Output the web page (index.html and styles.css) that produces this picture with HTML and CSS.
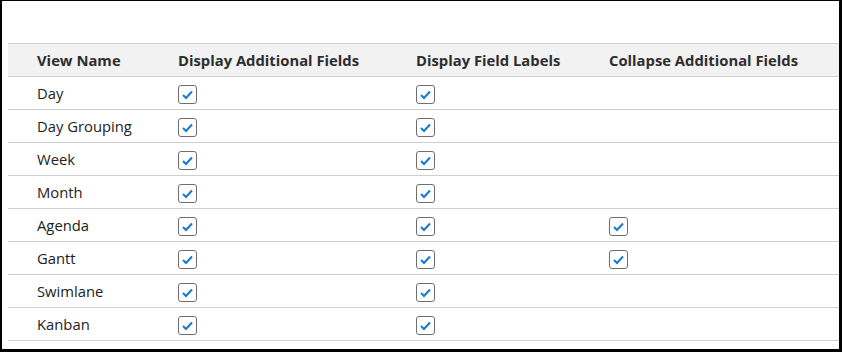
FILE: index.html
```html
<!DOCTYPE html>
<html>
<head>
    <title>Views</title>
    <link rel="stylesheet" href="styles.css">
</head>
<body>
    <div class="frame">
        <table class="views">
            <colgroup>
                <col class="c-name">
                <col class="c-add">
                <col class="c-labels">
                <col class="c-collapse">
            </colgroup>
            <thead>
                <tr>
                    <th>View Name</th>
                    <th>Display Additional Fields</th>
                    <th>Display Field Labels</th>
                    <th>Collapse Additional Fields</th>
                </tr>
            </thead>
            <tbody id="viewList"></tbody>
        </table>
    </div>

    <script>
        const views = [
            { name: 'Day', add: true, labels: true, collapse: false },
            { name: 'Day Grouping', add: true, labels: true, collapse: false },
            { name: 'Week', add: true, labels: true, collapse: false },
            { name: 'Month', add: true, labels: true, collapse: false },
            { name: 'Agenda', add: true, labels: true, collapse: true },
            { name: 'Gantt', add: true, labels: true, collapse: true },
            { name: 'Swimlane', add: true, labels: true, collapse: false },
            { name: 'Kanban', add: true, labels: true, collapse: false }
        ];

        const box = `<svg class="check" width="19" height="19" viewBox="0 0 19 19">
            <rect x="0.5" y="0.5" width="18" height="18" rx="2.5" fill="#fff" stroke="#6e6e6e"/>
            <polyline points="5,10 8,13 14,6.5" fill="none" stroke="#1479d4" stroke-width="2"/>
        </svg>`;

        const tbody = document.getElementById('viewList');
        views.forEach(v => {
            const row = document.createElement('tr');
            row.innerHTML = `
                <td>${v.name}</td>
                <td>${v.add ? box : ''}</td>
                <td>${v.labels ? box : ''}</td>
                <td>${v.collapse ? box : ''}</td>
            `;
            tbody.appendChild(row);
        });
    </script>
</body>
</html>
```

FILE: styles.css
```css
html, body {
    margin: 0;
    padding: 0;
    background: #fff;
}
.frame {
    box-sizing: border-box;
    width: 842px;
    height: 352px;
    border-style: solid;
    border-color: #000;
    border-width: 1px 3px 3px 2px;
    padding: 42px 0 0 6px;
    overflow: hidden;
}
.views {
    width: 831px;
    border-collapse: collapse;
    table-layout: fixed;
    font-family: "Open Sans", "Noto Sans", sans-serif;
    color: #222;
}
.c-name { width: 170px; }
.c-add { width: 238px; }
.c-labels { width: 193px; }
th, td {
    border-top: 1px solid #cfcfcf;
    border-bottom: 1px solid #cfcfcf;
    padding: 0;
    text-align: left;
    white-space: nowrap;
}
th:first-child, td:first-child { padding-left: 29px; }
th {
    height: 32px;
    background-color: #f2f2f2;
    color: #2e2e2e;
    font-size: 14.8px;
    font-weight: 700;
}
td {
    height: 32px;
    font-size: 14.8px;
}
.check {
    display: block;
    margin-top: 2px;
}
```
